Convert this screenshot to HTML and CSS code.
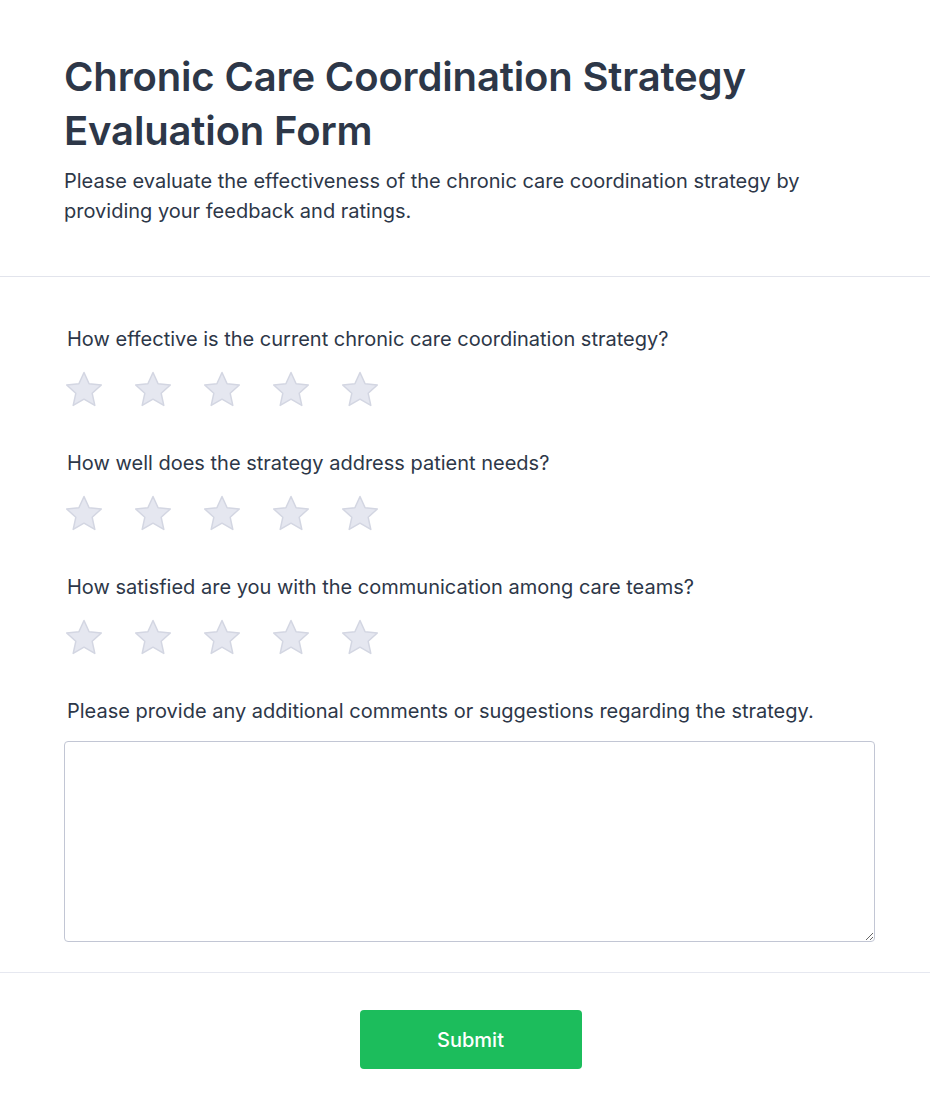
FILE: index.html
```html
<!DOCTYPE html>
<html lang="en">
<head>
<meta charset="utf-8">
<title>Chronic Care Coordination Strategy Evaluation Form</title>
<link rel="stylesheet" href="styles.css">
</head>
<body>
<svg width="0" height="0" class="defs" aria-hidden="true">
  <defs>
    <symbol id="star" viewBox="0 0 40 40">
      <path d="M20 2.5 L25.1 13.7 L37.3 15 L28.2 23.3 L30.8 35.4 L20 29.2 L9.2 35.4 L11.8 23.3 L2.7 15 L14.9 13.7 Z"/>
    </symbol>
  </defs>
</svg>
<div class="page">
  <header class="header">
    <h1 class="title">Chronic Care Coordination Strategy Evaluation Form</h1>
    <p class="desc">Please evaluate the effectiveness of the chronic care coordination strategy by providing your feedback and ratings.</p>
  </header>
  <main class="body">
    <div class="question">
      <label class="label">How effective is the current chronic care coordination strategy?</label>
      <div class="stars">
        <svg class="star"><use href="#star"/></svg>
        <svg class="star"><use href="#star"/></svg>
        <svg class="star"><use href="#star"/></svg>
        <svg class="star"><use href="#star"/></svg>
        <svg class="star"><use href="#star"/></svg>
      </div>
    </div>
    <div class="question">
      <label class="label">How well does the strategy address patient needs?</label>
      <div class="stars">
        <svg class="star"><use href="#star"/></svg>
        <svg class="star"><use href="#star"/></svg>
        <svg class="star"><use href="#star"/></svg>
        <svg class="star"><use href="#star"/></svg>
        <svg class="star"><use href="#star"/></svg>
      </div>
    </div>
    <div class="question">
      <label class="label">How satisfied are you with the communication among care teams?</label>
      <div class="stars">
        <svg class="star"><use href="#star"/></svg>
        <svg class="star"><use href="#star"/></svg>
        <svg class="star"><use href="#star"/></svg>
        <svg class="star"><use href="#star"/></svg>
        <svg class="star"><use href="#star"/></svg>
      </div>
    </div>
    <div class="comments">
      <label class="label" for="c">Please provide any additional comments or suggestions regarding the strategy.</label>
      <textarea id="c" class="textarea"></textarea>
    </div>
  </main>
  <footer class="footer">
    <button class="submit" type="button">Submit</button>
  </footer>
</div>
</body>
</html>
```

FILE: styles.css
```css
* { box-sizing: border-box; }
html, body { margin: 0; padding: 0; background: #ffffff; }
body {
  font-family: Inter, "Noto Sans", "Liberation Sans", sans-serif;
  color: #2d3748;
}
.defs { position: absolute; width: 0; height: 0; }
.page { width: 930px; }
.header {
  padding: 50px 55px 50px 64px;
  border-bottom: 1px solid #e2e4ec;
}
.title {
  margin: 0;
  font-size: 40px;
  line-height: 54px;
  font-weight: 600;
  letter-spacing: -0.15px;
  color: #2d3748;
}
.desc {
  margin: 8px 0 0;
  font-size: 20px;
  line-height: 30px;
  font-weight: 400;
  color: #2d3748;
}
.body {
  padding: 48px 55px 30px 64px;
  border-bottom: 1px solid #e6e8f0;
}
.question { margin-bottom: 42px; }
.label {
  display: block;
  padding-left: 3px;
  font-size: 20px;
  line-height: 28px;
  font-weight: 400;
  color: #2d3748;
}
.stars {
  display: flex;
  gap: 29px;
  margin-top: 17px;
  margin-bottom: -3px;
  height: 40px;
}
.star {
  width: 40px;
  height: 40px;
  fill: #e5e7f0;
  stroke: #d3d6e2;
  stroke-width: 1.5;
  stroke-linejoin: round;
}
.comments .textarea { margin-top: 16px; }
.textarea {
  display: block;
  width: 100%;
  height: 201px;
  border: 1px solid #c2c6d4;
  border-radius: 4px;
  background: #fff;
  font-family: inherit;
  resize: vertical;
}
.footer {
  display: flex;
  justify-content: center;
  padding: 37px 53px 50px 64px;
}
.submit {
  width: 222px;
  height: 59px;
  border: none;
  border-radius: 4px;
  background: #1cbd5c;
  color: #ffffff;
  font-family: inherit;
  font-size: 20px;
  font-weight: 500;
}
```
